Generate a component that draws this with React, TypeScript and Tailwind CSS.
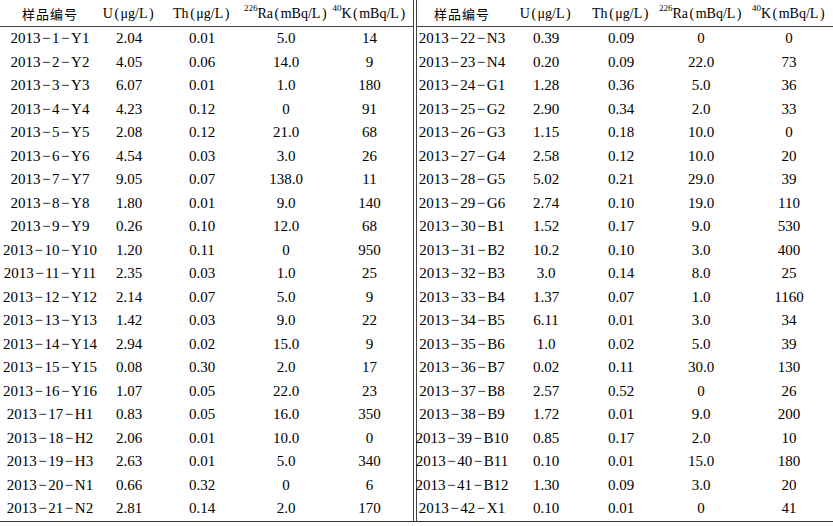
import React from "react";

type Row = [string, string, string, string, string];

const left: Row[] = [
  ["2013-1-Y1", "2.04", "0.01", "5.0", "14"],
  ["2013-2-Y2", "4.05", "0.06", "14.0", "9"],
  ["2013-3-Y3", "6.07", "0.01", "1.0", "180"],
  ["2013-4-Y4", "4.23", "0.12", "0", "91"],
  ["2013-5-Y5", "2.08", "0.12", "21.0", "68"],
  ["2013-6-Y6", "4.54", "0.03", "3.0", "26"],
  ["2013-7-Y7", "9.05", "0.07", "138.0", "11"],
  ["2013-8-Y8", "1.80", "0.01", "9.0", "140"],
  ["2013-9-Y9", "0.26", "0.10", "12.0", "68"],
  ["2013-10-Y10", "1.20", "0.11", "0", "950"],
  ["2013-11-Y11", "2.35", "0.03", "1.0", "25"],
  ["2013-12-Y12", "2.14", "0.07", "5.0", "9"],
  ["2013-13-Y13", "1.42", "0.03", "9.0", "22"],
  ["2013-14-Y14", "2.94", "0.02", "15.0", "9"],
  ["2013-15-Y15", "0.08", "0.30", "2.0", "17"],
  ["2013-16-Y16", "1.07", "0.05", "22.0", "23"],
  ["2013-17-H1", "0.83", "0.05", "16.0", "350"],
  ["2013-18-H2", "2.06", "0.01", "10.0", "0"],
  ["2013-19-H3", "2.63", "0.01", "5.0", "340"],
  ["2013-20-N1", "0.66", "0.32", "0", "6"],
  ["2013-21-N2", "2.81", "0.14", "2.0", "170"],
];

const right: Row[] = [
  ["2013-22-N3", "0.39", "0.09", "0", "0"],
  ["2013-23-N4", "0.20", "0.09", "22.0", "73"],
  ["2013-24-G1", "1.28", "0.36", "5.0", "36"],
  ["2013-25-G2", "2.90", "0.34", "2.0", "33"],
  ["2013-26-G3", "1.15", "0.18", "10.0", "0"],
  ["2013-27-G4", "2.58", "0.12", "10.0", "20"],
  ["2013-28-G5", "5.02", "0.21", "29.0", "39"],
  ["2013-29-G6", "2.74", "0.10", "19.0", "110"],
  ["2013-30-B1", "1.52", "0.17", "9.0", "530"],
  ["2013-31-B2", "10.2", "0.10", "3.0", "400"],
  ["2013-32-B3", "3.0", "0.14", "8.0", "25"],
  ["2013-33-B4", "1.37", "0.07", "1.0", "1160"],
  ["2013-34-B5", "6.11", "0.01", "3.0", "34"],
  ["2013-35-B6", "1.0", "0.02", "5.0", "39"],
  ["2013-36-B7", "0.02", "0.11", "30.0", "130"],
  ["2013-37-B8", "2.57", "0.52", "0", "26"],
  ["2013-38-B9", "1.72", "0.01", "9.0", "200"],
  ["2013-39-B10", "0.85", "0.17", "2.0", "10"],
  ["2013-40-B11", "0.10", "0.01", "15.0", "180"],
  ["2013-41-B12", "1.30", "0.09", "3.0", "20"],
  ["2013-42-X1", "0.10", "0.01", "0", "41"],
];

// sample id, dashes drawn as minus signs with a little air
const SampleId: React.FC<{ id: string }> = ({ id }) => {
  const parts = id.split("-");
  return (
    <span className="whitespace-nowrap">
      {parts.map((p, i) => (
        <React.Fragment key={i}>
          {i > 0 && <span className="mx-[1.5px]">−</span>}
          {p}
        </React.Fragment>
      ))}
    </span>
  );
};

const Unit: React.FC<{ sup?: string; name: string; unit: string }> = ({ sup, name, unit }) => (
  <div className="flex items-center justify-center whitespace-nowrap">
    {sup && <span className="text-[9px] relative -top-[5px]">{sup}</span>}
    {name}
    <span className="mx-[1.5px]">(</span>
    {unit}
    <span className="mx-[1.5px]">)</span>
  </div>
);

const Half: React.FC<{ rows: Row[]; cols: string }> = ({ rows, cols }) => (
  <div className="flex flex-col">
    <div className={`grid ${cols} h-[27px] border-b border-[#444] text-[14px] pt-[1px]`}>
      <div className="flex items-center justify-center font-['Noto_Sans_CJK_SC',sans-serif] text-[13px] tracking-[1px]">
        样品编号
      </div>
      <Unit name="U" unit="μg/L" />
      <Unit name="Th" unit="μg/L" />
      <Unit sup="226" name="Ra" unit="mBq/L" />
      <Unit sup="40" name="K" unit="mBq/L" />
    </div>
    {rows.map((r, i) => (
      <div key={i} className={`grid ${cols} h-[23.5px] text-[15px] leading-none`}>
        <div className="flex items-center justify-center">
          <SampleId id={r[0]} />
        </div>
        {r.slice(1).map((c, j) => (
          <div key={j} className="flex items-center justify-center whitespace-nowrap">
            {c}
          </div>
        ))}
      </div>
    ))}
  </div>
);

export default function App() {
  return (
    <div className="w-[833px] h-[526px] bg-white text-black font-['Liberation_Serif','Noto_Sans_CJK_SC',serif] overflow-hidden">
      <div className="flex w-[833px] border-b-[1.5px] border-[#333]">
        <div className="w-[413px]">
          <Half rows={left} cols="grid-cols-[100px_58px_88px_80px_87px]" />
        </div>
        <div className="w-[4px] border-x border-[#444]" />
        <div className="w-[416px]">
          <Half rows={right} cols="grid-cols-[90px_78px_72px_88px_88px]" />
        </div>
      </div>
    </div>
  );
}
